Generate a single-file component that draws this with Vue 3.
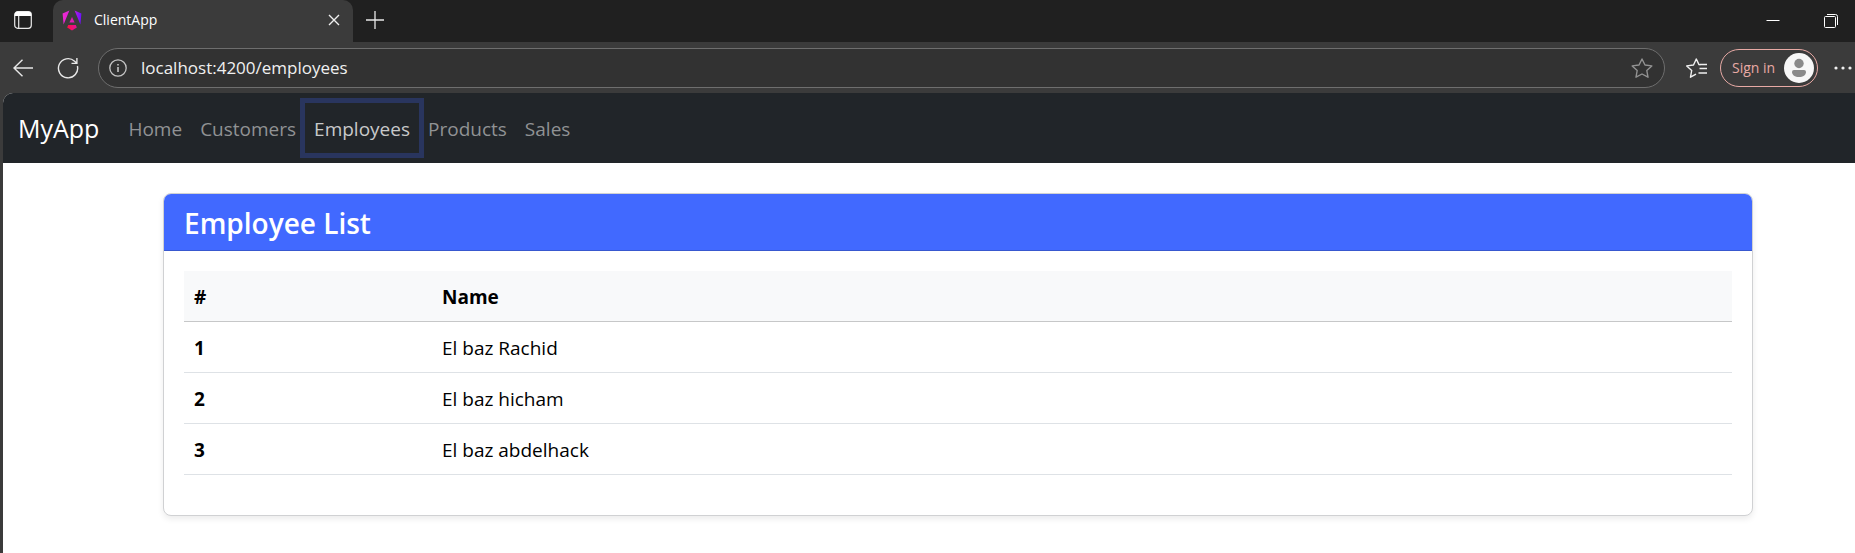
<script setup>
import { ref } from 'vue'

const address = ref('localhost:4200/employees')
const active = ref('Employees')
const links = ['Home', 'Customers', 'Employees', 'Products', 'Sales']
const employees = [
  { id: 1, name: 'El baz Rachid' },
  { id: 2, name: 'El baz hicham' },
  { id: 3, name: 'El baz abdelhack' },
]
</script>

<template>
  <div class="browser">
    <header class="tabstrip">
      <button class="icon-btn tab-actions" aria-label="Tab actions">
        <svg width="18" height="18" viewBox="0 0 18 18" fill="none">
          <rect x="0.7" y="0.7" width="16.6" height="16.6" rx="3" stroke="#e8e8e8" stroke-width="1.2" />
          <path d="M0.7 5V3.5a2.8 2.8 0 0 1 2.8-2.8h11a2.8 2.8 0 0 1 2.8 2.8V5z" fill="#fff" />
          <path d="M4.7 5v12" stroke="#e8e8e8" stroke-width="1.2" />
        </svg>
      </button>
      <div class="tab">
        <svg class="favicon" width="20" height="21" viewBox="0 0 20 21">
          <defs>
            <linearGradient id="wing" x1="0" y1="0" x2="1" y2="0">
              <stop offset="0" stop-color="#f02ad0" />
              <stop offset="0.5" stop-color="#d420dc" />
              <stop offset="1" stop-color="#6a10ff" />
            </linearGradient>
            <linearGradient id="base" x1="0" y1="0" x2="1" y2="0">
              <stop offset="0" stop-color="#ff1040" />
              <stop offset="1" stop-color="#e010a0" />
            </linearGradient>
          </defs>
          <path d="M7.4 0.5 0.6 3.4l1 11zM12.6 0.5l6.8 2.9-1 11z" fill="url(#wing)" />
          <path d="M10 7l-2.6 5.6h5.2z" fill="#e01cb8" />
          <path d="M6.2 15h7.6l1 2.4L10 20.4l-4.8-3z" fill="url(#base)" />
        </svg>
        <span class="tab-title">ClientApp</span>
        <button class="icon-btn" aria-label="Close tab">
          <svg width="12" height="12" viewBox="0 0 12 12" stroke="#f0f0f0" stroke-width="1.4"><path d="M1 1l10 10M11 1L1 11" /></svg>
        </button>
      </div>
      <button class="icon-btn new-tab" aria-label="New tab">
        <svg width="18" height="18" viewBox="0 0 18 18" stroke="#e8e8e8" stroke-width="1.3"><path d="M9 0v18M0 9h18" /></svg>
      </button>
      <div class="window-controls">
        <button class="icon-btn" aria-label="Minimize">
          <svg width="14" height="14" viewBox="0 0 14 14" stroke="#fff"><path d="M0.5 6.5h13" /></svg>
        </button>
        <button class="icon-btn" aria-label="Restore">
          <svg width="14" height="14" viewBox="0 0 14 14" fill="none" stroke="#fff"><rect x="0.5" y="2.5" width="11" height="11" rx="1" /><path d="M3 0.5h8.5a2 2 0 0 1 2 2V11" /></svg>
        </button>
      </div>
    </header>

    <div class="toolbar">
      <button class="icon-btn back" aria-label="Back">
        <svg width="20" height="18" viewBox="0 0 20 18" fill="none" stroke="#e8e8e8" stroke-width="1.4"><path d="M20 9H1M9.5 0.7L1 9l8.5 8.3" /></svg>
      </button>
      <button class="icon-btn reload" aria-label="Refresh">
        <svg width="22" height="22" viewBox="0 0 22 22" fill="none" stroke="#e8e8e8" stroke-width="1.4"><path d="M20.4 9A9.6 9.6 0 1 1 17.6 4.2L19.6 6M19.9 1v5.4h-5.4" /></svg>
      </button>
      <div class="address">
        <button class="icon-btn" aria-label="Site information">
          <svg width="18" height="18" viewBox="0 0 18 18" fill="none" stroke="#c4c4c4" stroke-width="1.3"><circle cx="9" cy="9" r="8.2" /><path d="M9 8v5M9 5v1.6" stroke-width="1.6" /></svg>
        </button>
        <input v-model="address" type="text" aria-label="Address" spellcheck="false" />
        <button class="icon-btn" aria-label="Add to favorites">
          <svg width="22" height="20" viewBox="0 0 22 20" fill="none" stroke="#929292" stroke-width="1.4" stroke-linejoin="round"><path d="M11 1l3 6 6.8.9-5 4.6 1.2 6.7L11 16l-6 3.2 1.2-6.7-5-4.6L8 7z" /></svg>
        </button>
      </div>
      <button class="icon-btn favorites" aria-label="Favorites">
        <svg width="21" height="20" viewBox="0 0 21 20" fill="none" stroke="#f0f0f0" stroke-width="1.4" stroke-linejoin="round"><path d="M14.5 6.8L13 6.6 10.3 1 7.500 7l-6.800.9 5 4.600-1.200 6.700 5.500-3M13.500 10.500H21M12.500 15H21M14 6.500H21" /></svg>
      </button>
      <button class="sign-in">
        <span>Sign in</span>
        <svg width="30" height="30" viewBox="0 0 30 30"><circle cx="15" cy="15" r="15" fill="#f7f7f7" /><circle cx="15" cy="10.500" r="4.700" fill="#8a8a8a" /><path d="M8 19a2 2 0 0 1 2-2h10a2 2 0 0 1 2 2c0 3-3 5-7 5s-7-2-7-5z" fill="#8a8a8a" /></svg>
      </button>
      <button class="icon-btn more" aria-label="Settings and more">
        <svg width="18" height="4" viewBox="0 0 18 4" fill="#f0f0f0"><circle cx="2" cy="2" r="1.600" /><circle cx="9" cy="2" r="1.600" /><circle cx="16" cy="2" r="1.600" /></svg>
      </button>
    </div>

    <div class="page">
      <nav class="navbar">
        <a class="brand" href="#">MyApp</a>
        <a
          v-for="link in links"
          :key="link"
          href="#"
          class="nav-link"
          :class="{ focused: link === active }"
          @click.prevent="active = link"
        >{{ link }}</a>
      </nav>
      <main class="content">
        <section class="card">
          <h2>Employee List</h2>
          <div class="card-body">
            <table>
              <thead>
                <tr><th class="number" scope="col">#</th><th scope="col">Name</th></tr>
              </thead>
              <tbody>
                <tr v-for="employee in employees" :key="employee.id">
                  <th scope="row">{{ employee.id }}</th>
                  <td>{{ employee.name }}</td>
                </tr>
              </tbody>
            </table>
          </div>
        </section>
      </main>
    </div>
  </div>
</template>

<style>
body {
  background: #3b3b3b;
}
</style>

<style scoped>
.browser {
  display: flex;
  flex-direction: column;
  min-height: 100vh;
  background: #3b3b3b;
  font-family: "Open Sans", "Noto Sans", sans-serif;
}
.browser * {
  box-sizing: border-box;
}
.icon-btn {
  display: flex;
  flex: none;
  padding: 0;
  border: 0;
  background: none;
}
.tabstrip {
  display: flex;
  align-items: center;
  height: 42px;
  background: #202020;
}
.tab-actions {
  width: 53px;
  padding: 0 0 2px 14px;
}
.tab {
  display: flex;
  align-items: center;
  align-self: stretch;
  width: 300px;
  padding: 0 13px 2px 9px;
  border-radius: 10px 10px 0 0;
  background: #3b3b3b;
}
.tab-title {
  flex: 1;
  padding: 0 0 2px 12px;
  color: #fff;
  font-size: 14px;
}
.new-tab {
  padding: 0 0 2px 13px;
}
.window-controls {
  display: flex;
  gap: 44px;
  margin-left: auto;
  padding-right: 17px;
}
.toolbar {
  display: flex;
  align-items: center;
  height: 51px;
  padding: 0 3px 0 13px;
}
.reload {
  margin-left: 24px;
}
.address {
  display: flex;
  flex: 1;
  align-items: center;
  height: 40px;
  margin-left: 19px;
  padding: 0 11px 0 10px;
  border: 1px solid #6e6e6e;
  border-radius: 20px;
  background: #323232;
}
.address input {
  flex: 1;
  min-width: 0;
  padding: 0 0 0 14px;
  border: 0;
  outline: 0;
  background: none;
  color: #f0f0f0;
  font-family: inherit;
  font-size: 17px;
}
.favorites {
  margin-left: 21px;
}
.sign-in {
  display: flex;
  flex: none;
  align-items: center;
  justify-content: space-between;
  width: 98px;
  height: 38px;
  margin-left: 13px;
  padding: 0 3px 0 11px;
  border: 1px solid #e8aaa5;
  border-radius: 19px;
  background: none;
  color: #e8aaa5;
  font-family: inherit;
  font-size: 14px;
}
.more {
  margin-left: 16px;
}
.page {
  flex: 1;
  margin-left: 3px;
  border-top-left-radius: 10px;
  overflow: hidden;
  background: #fff;
}
.navbar {
  display: flex;
  align-items: center;
  height: 70px;
  padding: 0 15px;
  background: #212529;
}
.navbar a {
  text-decoration: none;
}
.brand {
  margin-right: 20px;
  color: #fff;
  font-size: 25px;
}
.nav-link {
  padding: 2px 9px 0;
  color: #909294;
  font-size: 19px;
  line-height: 48px;
}
.nav-link.focused {
  color: #c8c9ca;
  box-shadow: 0 0 0 5px #29355e;
}
.content {
  padding: 30px 102px 36px 160px;
}
.card {
  overflow: hidden;
  border: 1px solid #d0d1d3;
  border-radius: 8px;
  background: #fff;
  box-shadow: 0 3px 6px rgba(0, 0, 0, 0.08);
}
h2 {
  margin: 0;
  padding: 11px 20px 9px;
  border-bottom: 1px solid #3858cf;
  background: #4169ff;
  color: #fff;
  font-size: 28px;
  font-weight: 600;
  line-height: 36px;
}
.card-body {
  padding: 20px 20px 40px;
}
table {
  width: 100%;
  border-collapse: collapse;
  color: #000;
  font-size: 19px;
  line-height: 30px;
  text-align: left;
}
th,
td {
  padding: 11px 10px 9px;
  border-bottom: 1px solid #dee2e6;
}
thead th {
  border-bottom-color: #c6c7c8;
  background: #f8f9fa;
}
.number {
  width: 248px;
}
</style>
